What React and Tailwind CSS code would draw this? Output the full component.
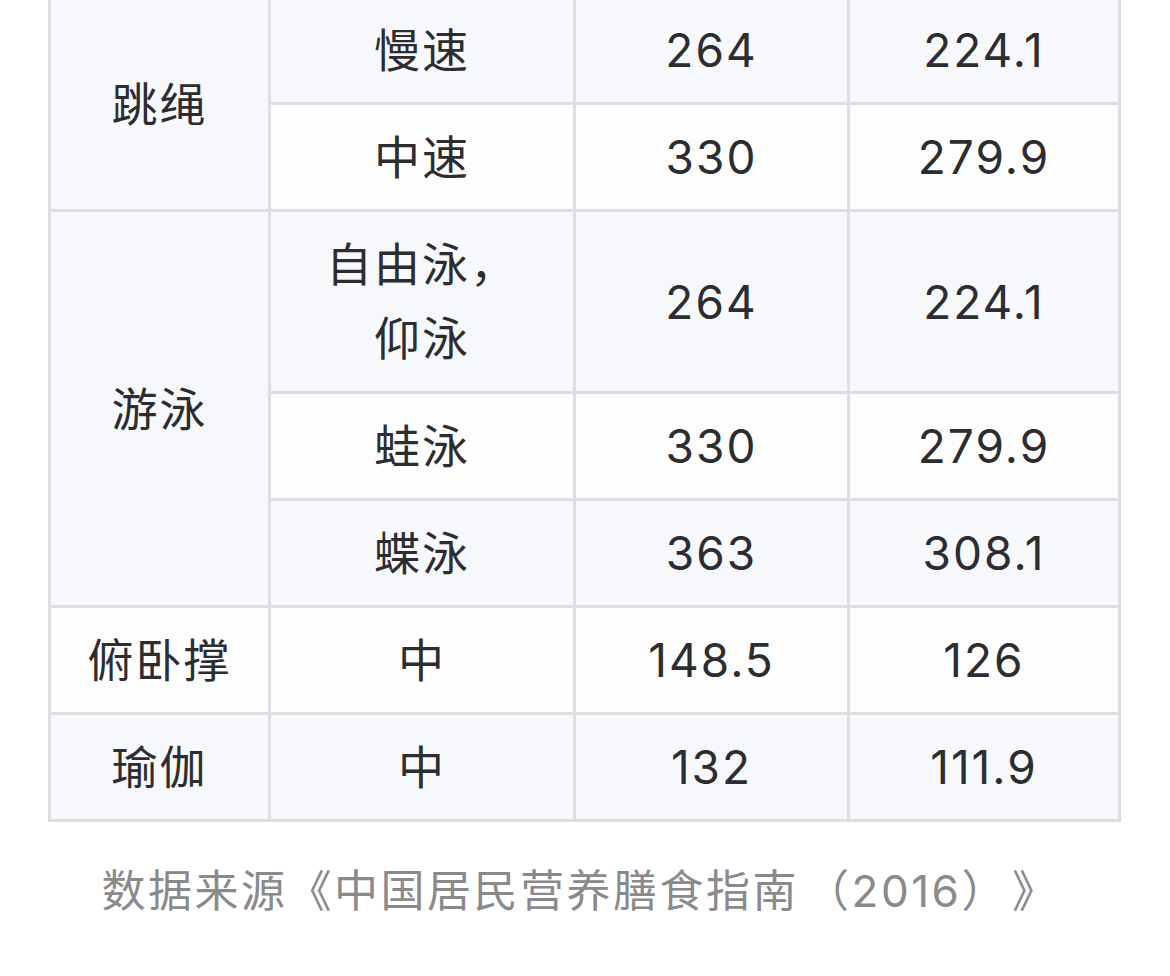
import React from "react";

const light = "bg-[#f7f8fc]";
const white = "bg-[#fdfdfd]";
const cell =
  "border-[3px] border-[#dddee2] text-center align-middle px-2 py-[16px] leading-[72px]";

function Row({ bg, first, name, a, b, nameClass = "" }) {
  return (
    <tr className={bg}>
      {first}
      <td className={`${cell} ${nameClass}`}>{name}</td>
      <td className={cell}>{a}</td>
      <td className={cell}>{b}</td>
    </tr>
  );
}

export default function App() {
  return (
    <div
      className="w-[1170px] min-h-[976px] bg-white text-[#2d2d30] overflow-hidden"
      style={{ fontFamily: 'Inter, "Noto Sans CJK SC", sans-serif' }}
    >
      <div className="pl-[48px] mt-[-5px]">
        <table className="table-fixed border-collapse w-[1073px] text-[46px] tracking-[2px]">
          <colgroup>
            <col className="w-[220px]" />
            <col className="w-[305px]" />
            <col className="w-[274px]" />
            <col className="w-[271px]" />
          </colgroup>
          <tbody>
            <Row
              bg={light}
              first={
                <td rowSpan={2} className={`${cell} ${light}`}>
                  跳绳
                </td>
              }
              name="慢速"
              a="264"
              b="224.1"
            />
            <Row bg={white} name="中速" a="330" b="279.9" />
            <Row
              bg={light}
              first={
                <td rowSpan={3} className={`${cell} ${light}`}>
                  游泳
                </td>
              }
              name={
                <>
                  自由泳，
                  <br />
                  仰泳
                </>
              }
              nameClass="leading-[73.5px]"
              a="264"
              b="224.1"
            />
            <Row bg={white} name="蛙泳" a="330" b="279.9" />
            <Row bg={light} name="蝶泳" a="363" b="308.1" />
            <Row
              bg={white}
              first={<td className={cell}>俯卧撑</td>}
              name="中"
              a="148.5"
              b="126"
            />
            <Row
              bg={light}
              first={<td className={cell}>瑜伽</td>}
              name="中"
              a="132"
              b="111.9"
            />
          </tbody>
        </table>
      </div>
      <p className="mt-[40px] text-center text-[44px] tracking-[2.5px] text-[#8a8a8c] leading-[58px] pr-[10px] [text-spacing-trim:space-all]">
        数据来源《中国居民营养膳食指南<span className="ml-[6px]">（</span>2016<span className="mr-[4px]">）</span>》
      </p>
    </div>
  );
}
